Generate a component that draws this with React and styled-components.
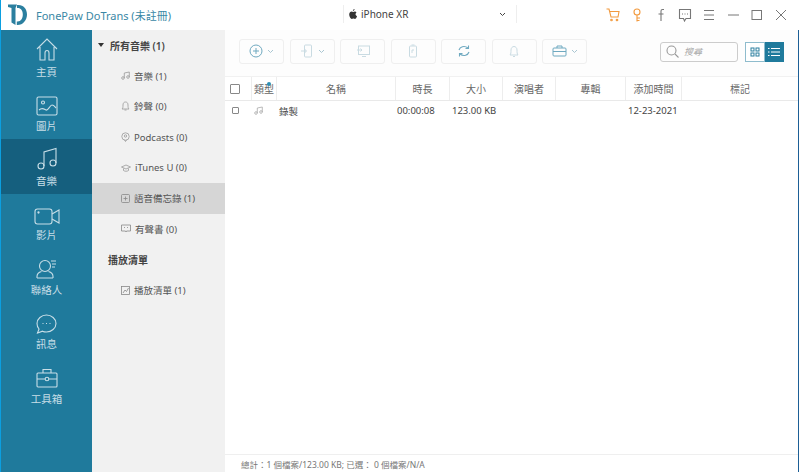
import React from "react";
import styled, { createGlobalStyle } from "styled-components";

const GlobalStyle = createGlobalStyle`
  html, body { margin: 0; padding: 0; background: #fff; }
  body { font-family: "Noto Sans", "Noto Sans CJK TC", sans-serif; overflow: hidden; }
  * { box-sizing: border-box; }
`;

const Win = styled.div`
  width: 800px;
  height: 472px;
  display: flex;
  flex-direction: column;
  border-left: 1px solid #0b9fe0;
  overflow: hidden;
`;

const TitleBar = styled.header`
  height: 30px;
  flex: none;
  display: grid;
  grid-template-columns: 342px 174px 1fr;
  align-items: center;
  background: #fff;
`;

const Brand = styled.div`
  display: flex;
  align-items: center;
  gap: 9px;
  padding-left: 7px;
  font-size: 11px;
  color: #3a87a5;
  white-space: nowrap;
`;

const Device = styled.div`
  height: 18px;
  margin-top: -2px;
  display: flex;
  align-items: center;
  justify-content: space-between;
  padding: 0 10px 0 5px;
  border-left: 1px solid #eee;
  border-right: 1px solid #eee;
  font-size: 10px;
  color: #444;
`;

const DeviceName = styled.span`
  display: flex;
  align-items: center;
  gap: 4px;
`;

const WinTools = styled.div`
  display: flex;
  justify-content: flex-end;
  align-items: center;
  padding-right: 7px;
  margin-top: -1px;
`;

const WinTool = styled.span`
  width: 24px;
  display: flex;
  justify-content: center;
`;

const Body = styled.div`
  flex: 1;
  min-height: 0;
  display: flex;
  margin-right: 1px;
  border-right: 1px solid #1d5f96;
`;

const Nav = styled.nav`
  width: 91px;
  flex: none;
  background: #1f7a9c;
`;

const NavItem = styled.div`
  height: 54.5px;
  display: flex;
  flex-direction: column;
  align-items: center;
  justify-content: flex-end;
  gap: 4.5px;
  padding-bottom: 6px;
  font-size: 10.5px;
  line-height: 13px;
  color: #c8dee7;
  background: ${(p) => (p.$active ? "#155f7e" : "transparent")};
`;

const Tree = styled.aside`
  width: 133px;
  flex: none;
  background: #f1f1f1;
  font-size: 9.5px;
  color: #555;
`;

const TreeHead = styled.div`
  height: 30.6px;
  display: flex;
  align-items: center;
  gap: 6px;
  padding-left: ${(p) => (p.$plain ? "16px" : "6px")};
  font-size: 10px;
  font-weight: 600;
  color: #444;
`;

const Caret = styled.span`
  width: 0;
  height: 0;
  border-left: 3px solid transparent;
  border-right: 3px solid transparent;
  border-top: 4px solid #333;
`;

const TreeRow = styled.div`
  height: 30.6px;
  display: flex;
  align-items: center;
  gap: 4px;
  padding-left: 29px;
  white-space: nowrap;
  background: ${(p) => (p.$active ? "#d6d6d6" : "transparent")};
`;

const Main = styled.main`
  flex: 1;
  min-width: 0;
  display: flex;
  flex-direction: column;
`;

const Toolbar = styled.div`
  height: 46px;
  flex: none;
  display: flex;
  align-items: center;
  padding: 0 14px;
  background: #fdfdfd;
`;

const ToolGroup = styled.div`
  display: flex;
  gap: 5.5px;
  margin-top: -4px;
`;

const ToolBtn = styled.div`
  width: 45px;
  height: 25px;
  display: flex;
  align-items: center;
  justify-content: center;
  gap: 4px;
  border: 1px solid #efefef;
  border-radius: 3px;
  background: #fdfdfd;
`;

const Right = styled.div`
  margin-left: auto;
  display: flex;
  align-items: center;
  gap: 7px;
  margin-top: -3px;
`;

const Search = styled.div`
  width: 78px;
  height: 20px;
  display: flex;
  align-items: center;
  gap: 5px;
  padding-left: 5px;
  border: 1px solid #ccc;
  border-radius: 3px;
  font-size: 9px;
  font-style: italic;
  color: #aaa;
`;

const Toggle = styled.div`
  display: flex;
  width: 39px;
  height: 20px;
`;

const ToggleBtn = styled.div`
  flex: 1;
  display: flex;
  align-items: center;
  justify-content: center;
  background: ${(p) => (p.$on ? "#1f7a9c" : "#fff")};
  border: 1px solid ${(p) => (p.$on ? "#1f7a9c" : "#8fbccd")};
`;

const Columns = "27px 25px 119px 54px 53px 53px 70px 56px 1fr";

const HeadRow = styled.div`
  height: 25px;
  flex: none;
  display: grid;
  grid-template-columns: ${Columns};
  background: #fff;
  border-top: 1px solid #f1f1f1;
  border-bottom: 1px solid #e9e9e9;
`;

const HeadCell = styled.div`
  position: relative;
  display: flex;
  align-items: center;
  justify-content: center;
  font-size: 10px;
  color: #666;
  border-right: 1px solid #ededed;
  padding-right: ${(p) => p.$padRight || 0}px;
  &:last-child { border-right: none; }
`;

const SortDot = styled.span`
  position: absolute;
  top: 5px;
  left: 15px;
  width: 4px;
  height: 4px;
  border-radius: 50%;
  background: #2b8fb5;
`;

const DataRow = styled.div`
  height: 19px;
  flex: none;
  display: grid;
  grid-template-columns: ${Columns};
  align-items: center;
  font-size: 9.5px;
  color: #444;
`;

const Cell = styled.div`
  display: flex;
  align-items: center;
  justify-content: ${(p) => p.$align || "flex-start"};
  padding-left: ${(p) => p.$pad || 0}px;
  padding-right: ${(p) => p.$padRight || 0}px;
  white-space: nowrap;
`;

const Check = styled.span`
  display: block;
  width: ${(p) => p.$size}px;
  height: ${(p) => p.$size}px;
  border: 1px solid #888;
  border-radius: 1px;
  background: #fff;
`;

const Spacer = styled.div`
  flex: 1;
`;

const Status = styled.footer`
  height: 18px;
  flex: none;
  display: flex;
  align-items: center;
  padding-left: 16px;
  border-top: 1px solid #efefef;
  font-size: 8.5px;
  color: #777;
  white-space: nowrap;
`;

const Svg = ({ size = 16, w, h, color = "currentColor", sw = 1, children }) => (
  <svg width={w || size} height={h || size} viewBox={`0 0 ${w || size} ${h || size}`} fill="none" stroke={color} strokeWidth={sw} style={{ display: "block", flex: "none" }}>
    {children}
  </svg>
);

const Logo = () => (
  <svg width="19" height="22" viewBox="0 0 19 22" style={{ display: "block" }}>
    <path d="M0 .5h9l-1.500 3.500V21L3.500 18.500V4L0 3z" fill="#2b7f9f" />
    <path d="M9 1h1.500c5 0 8.500 4 8.500 9.500S15 21 9.500 21H8.800v-3.500h1c3 0 5-3 5-7s-2-6.500-5-6.500H9z" fill="#2b7f9f" />
  </svg>
);

const Chevron = ({ color = "#888" }) => (
  <Svg w={7} h={5} color={color}>
    <path d="M1 1l2.500 2.500L6 1" />
  </Svg>
);

const Apple = () => (
  <svg width="8" height="10" viewBox="0 0 8 10" style={{ display: "block" }}>
    <path d="M5.600 0c0 1-.8 1.900-1.700 1.900C3.800 1 4.700.1 5.600 0zM6.500 5.200c0-1 .6-1.500 1-1.800-.5-.8-1.300-.9-1.600-.9-.7 0-1.300.4-1.700.4s-1-.4-1.600-.4C1.500 2.500.2 3.500.2 5.500c0 2 1.400 4.500 2.600 4.500.5 0 .8-.4 1.500-.4s.9.4 1.500.4c1 0 2-1.700 2.300-2.800-.9-.4-1.600-1.200-1.600-2z" fill="#333" />
  </svg>
);

const HomeIcon = () => (
  <Svg w={22} h={23} sw={1.1}>
    <path d="M1 11L11 1l10 10M4 9v13h5v-7c0-1.500 1-2.500 2-2.500s2 1 2 2.500v7h5V9" />
  </Svg>
);
const PicIcon = () => (
  <Svg w={22} h={20} sw={1.1}>
    <rect x="1" y="1" width="20" height="18" rx="1.500" />
    <circle cx="7" cy="6.500" r="1.500" />
    <path d="M3 14c3-3 5-1 7 0s4-5 6-5 3 2 4 3" />
  </Svg>
);
const MusicIcon = () => (
  <Svg w={20} h={23} sw={1.1}>
    <circle cx="4" cy="19" r="3" />
    <circle cx="16" cy="16" r="3" />
    <path d="M7 19V5l12-3.500V16" />
  </Svg>
);
const VideoIcon = () => (
  <Svg w={26} h={17} sw={1.1}>
    <rect x="1" y="1" width="17" height="15" rx="2.500" />
    <path d="M18 6l7-4v13l-7-4" />
    <circle cx="4.500" cy="4.500" r=".6" />
  </Svg>
);
const ContactIcon = () => (
  <Svg w={21} h={20} sw={1.1}>
    <circle cx="9" cy="7" r="5.500" />
    <path d="M1 19v-1.500c0-3 2.500-4.500 4.500-5M17 19v-1.500c0-3-2.500-4.500-4.500-5M1 19h16M15 2h5M16 5h4M16 8h3" />
  </Svg>
);
const ChatIcon = () => (
  <Svg w={21} h={20} sw={1.1}>
    <path d="M10.500 1c5 0 9.500 3.800 9.500 8.500S15.500 18 10.500 18c-1.500 0-3-.3-4-.8L1.500 19 3 15C1.700 13.500 1 11.500 1 9.500 1 4.800 5.500 1 10.500 1z" />
    <path d="M6.500 9.500h1M10 9.500h1M13.500 9.500h1" />
  </Svg>
);
const BoxIcon = () => (
  <Svg w={22} h={20} sw={1.1}>
    <rect x="1" y="5" width="20" height="14" rx="1" />
    <path d="M7 5V1.500h8V5M1 11h8M13 11h8" />
    <circle cx="11" cy="11" r="1.800" />
  </Svg>
);

const NoteSm = ({ color = "#999" }) => (
  <Svg w={9} h={9} color={color} sw={0.8}>
    <circle cx="2" cy="7" r="1.300" />
    <circle cx="7" cy="6" r="1.300" />
    <path d="M3.300 7V2l5-1v5" />
  </Svg>
);
const BellSm = () => (
  <Svg w={9} h={10} color="#999" sw={0.8}>
    <path d="M1 8c1-1 1-2 1-4s1-3 2.500-3S7 2 7 4s0 3 1 4zM3.500 9h2" />
  </Svg>
);
const PinSm = () => (
  <Svg w={9} h={10} color="#999" sw={0.8}>
    <circle cx="4.500" cy="4.500" r="3.700" />
    <circle cx="4.500" cy="4" r="1.200" />
    <path d="M3.500 8l1 1.500 1-1.500" />
  </Svg>
);
const CapSm = () => (
  <Svg w={10} h={8} color="#999" sw={0.8}>
    <path d="M.5 3L5 1l4.500 2L5 5zM2.500 4.500V6.500c1.500 1 3.500 1 5 0V4.500" />
  </Svg>
);
const MemoSm = () => (
  <Svg w={9} h={9} color="#888" sw={0.8}>
    <rect x=".5" y=".5" width="8" height="8" rx="1" />
    <path d="M4.500 2.500v4M2.500 4.500h4" />
  </Svg>
);
const BookSm = () => (
  <Svg w={10} h={9} color="#888" sw={0.8}>
    <path d="M.5 1h9v6h-4l-.5 1-.5-1h-4zM3 3.500h1M6 3.500h1" />
  </Svg>
);
const ListSm = () => (
  <Svg w={9} h={9} color="#888" sw={0.8}>
    <rect x=".5" y=".5" width="8" height="8" />
    <path d="M2 7l2-3 1.500 1.500L7.500 2" />
  </Svg>
);

const tools = [
  { chevron: true, icon: <Svg size={14} color="#6fa9c0"><circle cx="7" cy="7" r="6" /><path d="M7 4v6M4 7h6" /></Svg> },
  { chevron: true, icon: <Svg w={14} h={14} color="#c9dbe2"><rect x="4.500" y="1" width="7" height="12" rx="1" /><path d="M1 7h5M4.500 5l2 2-2 2" /></Svg> },
  { icon: <Svg w={14} h={14} color="#c9dbe2"><rect x="2.500" y="2" width="11" height="8.500" /><path d="M6 12.500h4M1 6h5M4.500 4.500L6 6 4.500 7.500" /></Svg> },
  { icon: <Svg w={10} h={14} color="#c9dbe2"><rect x="1.500" y="2" width="7" height="11" rx="1" /><path d="M3.500 1h3M4 6h2M4 6v3" /></Svg> },
  { icon: <Svg w={14} h={14} color="#6fa9c0" sw={1.1}><path d="M2 6c1-3 5-5 9-2M12 8c-1 3-5 5-9 2M11.500 1.500V4.500H8.500M2.500 12.500V9.500H5.500" /></Svg> },
  { icon: <Svg w={10} h={13} color="#c9dbe2"><path d="M1 10c1-1 1-3 1-5s1.300-3.500 3-3.500S8 3 8 5s0 4 1 5zM4 11.500h2" /></Svg> },
  { chevron: true, icon: <Svg w={15} h={12} color="#6fa9c0"><rect x="1" y="3" width="13" height="8" rx="1" /><path d="M5 3V1h5v2M1 6.500h13" /></Svg> },
];

const navItems = [
  ["主頁", <HomeIcon />],
  ["圖片", <PicIcon />],
  ["音樂", <MusicIcon />, true],
  ["影片", <VideoIcon />],
  ["聯絡人", <ContactIcon />],
  ["訊息", <ChatIcon />],
  ["工具箱", <BoxIcon />],
];

export default function App() {
  return (
    <>
      <GlobalStyle />
      <Win>
        <TitleBar>
          <Brand>
            <Logo />
            <span>FonePaw DoTrans (未註冊)</span>
          </Brand>
          <Device>
            <DeviceName>
              <Apple />
              iPhone XR
            </DeviceName>
            <Chevron color="#444" />
          </Device>
          <WinTools>
            <WinTool>
              <Svg w={14} h={14} color="#f29a3e" sw={1.1}>
                <path d="M.5 1h2.500l2 8h7l1-5.500H3.500" />
                <circle cx="5.500" cy="12" r=".8" />
                <circle cx="11" cy="12" r=".8" />
              </Svg>
            </WinTool>
            <WinTool>
              <Svg w={11} h={14} color="#f29a3e" sw={1.1}>
                <circle cx="5" cy="4" r="3" />
                <path d="M5 7v6.500M5 10h3M5 12.500h2.500" />
              </Svg>
            </WinTool>
            <WinTool>
              <Svg w={10} h={14} color="#777" sw={1.1}>
                <path d="M8 1.500H6.500c-1 0-1.500.5-1.500 1.500v10M2.500 6h5" />
              </Svg>
            </WinTool>
            <WinTool>
              <Svg w={14} h={14} color="#777" sw={1.1}>
                <path d="M1.500 1.500h11v9H8L6.500 13l-1-2.500h-4z" />
                <path d="M4 6h1M6.500 6h1M9 6h1" />
              </Svg>
            </WinTool>
            <WinTool>
              <Svg w={12} h={12} color="#777">
                <path d="M1 1.500h10M1 6h10M1 10.500h10" />
              </Svg>
            </WinTool>
            <WinTool>
              <Svg w={11} h={12} color="#777">
                <path d="M0 6h11" />
              </Svg>
            </WinTool>
            <WinTool>
              <Svg w={12} h={12} color="#777">
                <rect x="1" y="1.500" width="9.500" height="9" />
              </Svg>
            </WinTool>
            <WinTool>
              <Svg w={12} h={12} color="#777">
                <path d="M1 1l10 10M11 1L1 11" />
              </Svg>
            </WinTool>
          </WinTools>
        </TitleBar>
        <Body>
          <Nav>
            {navItems.map(([label, icon, active]) => (
              <NavItem key={label} $active={active}>
                {icon}
                <span>{label}</span>
              </NavItem>
            ))}
          </Nav>
          <Tree>
            <TreeHead>
              <Caret />
              所有音樂 (1)
            </TreeHead>
            <TreeRow><NoteSm />音樂 (1)</TreeRow>
            <TreeRow><BellSm />鈴聲 (0)</TreeRow>
            <TreeRow><PinSm />Podcasts (0)</TreeRow>
            <TreeRow><CapSm />iTunes U (0)</TreeRow>
            <TreeRow $active><MemoSm />語音備忘錄 (1)</TreeRow>
            <TreeRow><BookSm />有聲書 (0)</TreeRow>
            <TreeHead $plain>播放清單</TreeHead>
            <TreeRow><ListSm />播放清單 (1)</TreeRow>
          </Tree>
          <Main>
            <Toolbar>
              <ToolGroup>
                {tools.map((t, i) => (
                  <ToolBtn key={i}>
                    {t.icon}
                    {t.chevron && <Chevron color="#a9c6d2" />}
                  </ToolBtn>
                ))}
              </ToolGroup>
              <Right>
                <Search>
                  <Svg w={13} h={13} color="#999" sw={1.1}>
                    <circle cx="5.500" cy="5.500" r="4.500" />
                    <path d="M9 9l3.500 3.500" />
                  </Svg>
                  搜尋
                </Search>
                <Toggle>
                  <ToggleBtn>
                    <Svg w={10} h={10} color="#2b7f9f">
                      <rect x="1" y="1" width="3" height="3" />
                      <rect x="6" y="1" width="3" height="3" />
                      <rect x="1" y="6" width="3" height="3" />
                      <rect x="6" y="6" width="3" height="3" />
                    </Svg>
                  </ToggleBtn>
                  <ToggleBtn $on>
                    <Svg w={12} h={10} color="#fff">
                      <path d="M0 1.500h1.500M3 1.500h9M0 5h1.500M3 5h9M0 8.500h1.500M3 8.500h9" />
                    </Svg>
                  </ToggleBtn>
                </Toggle>
              </Right>
            </Toolbar>
            <HeadRow>
              <HeadCell $padRight={6}><Check $size={10} /></HeadCell>
              <HeadCell><SortDot />類型</HeadCell>
              <HeadCell>名稱</HeadCell>
              <HeadCell>時長</HeadCell>
              <HeadCell>大小</HeadCell>
              <HeadCell>演唱者</HeadCell>
              <HeadCell>專輯</HeadCell>
              <HeadCell>添加時間</HeadCell>
              <HeadCell>標記</HeadCell>
            </HeadRow>
            <DataRow>
              <Cell $align="center" $padRight={6}><Check $size={7} /></Cell>
              <Cell $pad={2}><NoteSm color="#aaa" /></Cell>
              <Cell $pad={2}>錄製</Cell>
              <Cell $pad={1}>00:00:08</Cell>
              <Cell $pad={2}>123.00 KB</Cell>
              <Cell />
              <Cell />
              <Cell $pad={2}>12-23-2021</Cell>
              <Cell />
            </DataRow>
            <Spacer />
            <Status>總計：1 個檔案/123.00 KB; 已選： 0 個檔案/N/A</Status>
          </Main>
        </Body>
      </Win>
    </>
  );
}
